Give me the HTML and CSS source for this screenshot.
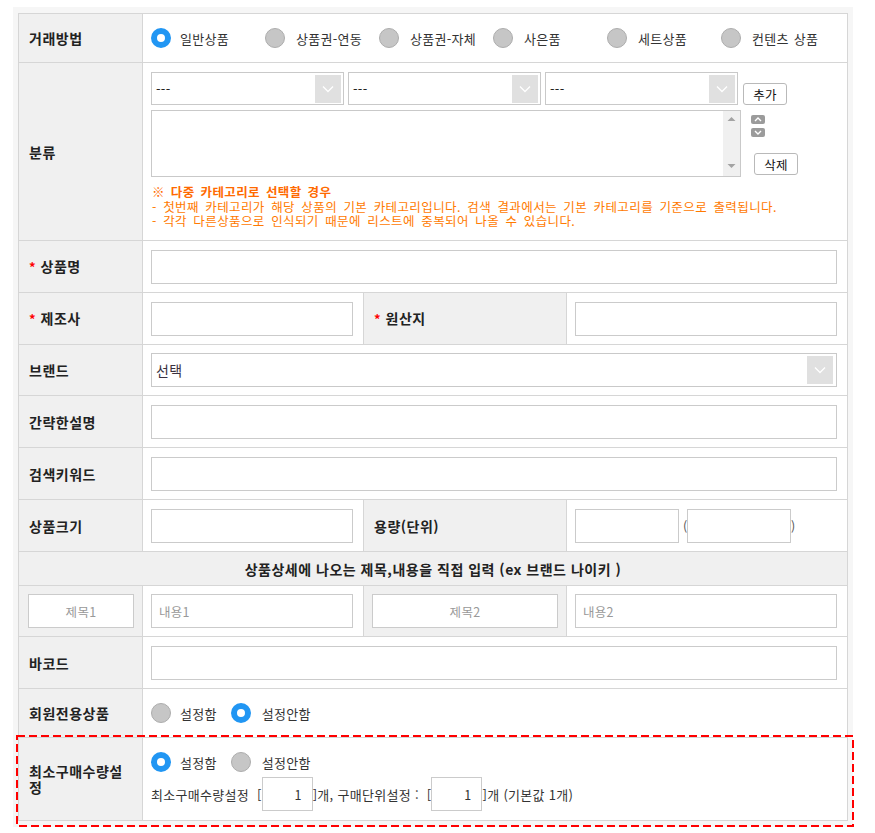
FILE: index.html
```html
<!DOCTYPE html>
<html lang="ko">
<head>
<meta charset="utf-8">
<title>상품등록</title>
<link rel="stylesheet" href="styles.css">
</head>
<body>
<div class="page">
  <table class="form">
    <colgroup><col class="c1"><col class="c2"><col class="c3"><col class="c4"></colgroup>
    <tr class="h49">
      <th>거래방법</th>
      <td colspan="3">
        <div class="radios wide">
          <span class="opt"><span class="rd on"></span>일반상품</span>
          <span class="opt"><span class="rd"></span>상품권-연동</span>
          <span class="opt"><span class="rd"></span>상품권-자체</span>
          <span class="opt"><span class="rd"></span>사은품</span>
          <span class="opt"><span class="rd"></span>세트상품</span>
          <span class="opt"><span class="rd"></span>컨텐츠 상품</span>
        </div>
      </td>
    </tr>
    <tr class="h178">
      <th>분류</th>
      <td colspan="3" class="cat">
        <div class="cat-top">
          <div class="sel cat-sel"><span>---</span><span class="arr"><svg width="12" height="8" viewBox="0 0 12 8"><polyline points="1,1.5 6,6.5 11,1.5" fill="none" stroke="#fff" stroke-width="1.3"/></svg></span></div>
          <div class="sel cat-sel"><span>---</span><span class="arr"><svg width="12" height="8" viewBox="0 0 12 8"><polyline points="1,1.5 6,6.5 11,1.5" fill="none" stroke="#fff" stroke-width="1.3"/></svg></span></div>
          <div class="sel cat-sel"><span>---</span><span class="arr"><svg width="12" height="8" viewBox="0 0 12 8"><polyline points="1,1.5 6,6.5 11,1.5" fill="none" stroke="#fff" stroke-width="1.3"/></svg></span></div>
          <span class="btn add">추가</span>
        </div>
        <div class="cat-mid">
          <div class="listbox">
            <div class="lb-area"></div>
            <div class="lb-scroll">
              <svg width="9" height="6" viewBox="0 0 9 6"><polygon points="0.5,5 4.5,1 8.5,5" fill="#a3a3a3"/></svg>
              <svg width="9" height="6" viewBox="0 0 9 6"><polygon points="0.5,1 4.5,5 8.5,1" fill="#a3a3a3"/></svg>
            </div>
          </div>
          <div class="side">
            <span class="mv"><svg width="8" height="5" viewBox="0 0 8 5"><polyline points="1,4 4,1 7,4" fill="none" stroke="#fff" stroke-width="1.4"/></svg></span>
            <span class="mv dn"><svg width="8" height="5" viewBox="0 0 8 5"><polyline points="1,1 4,4 7,1" fill="none" stroke="#fff" stroke-width="1.4"/></svg></span>
            <span class="btn del">삭제</span>
          </div>
        </div>
        <div class="notes">
          <p class="nt">※ 다중 카테고리로 선택할 경우</p>
          <p>- 첫번째 카테고리가 해당 상품의 기본 카테고리입니다. 검색 결과에서는 기본 카테고리를 기준으로 출력됩니다.</p>
          <p>- 각각 다른상품으로 인식되기 때문에 리스트에 중복되어 나올 수 있습니다.</p>
        </div>
      </td>
    </tr>
    <tr class="h52">
      <th><span class="req">*</span>상품명</th>
      <td colspan="3"><input class="inp" type="text"></td>
    </tr>
    <tr class="h52">
      <th><span class="req">*</span>제조사</th>
      <td><input class="inp" type="text"></td>
      <th><span class="req">*</span>원산지</th>
      <td class="r"><input class="inp" type="text"></td>
    </tr>
    <tr class="h51">
      <th>브랜드</th>
      <td colspan="3">
        <div class="sel brand"><span>선택</span><span class="arr"><svg width="12" height="8" viewBox="0 0 12 8"><polyline points="1,1.5 6,6.5 11,1.5" fill="none" stroke="#fff" stroke-width="1.3"/></svg></span></div>
      </td>
    </tr>
    <tr class="h52">
      <th>간략한설명</th>
      <td colspan="3"><input class="inp" type="text"></td>
    </tr>
    <tr class="h52">
      <th>검색키워드</th>
      <td colspan="3"><input class="inp" type="text"></td>
    </tr>
    <tr class="h52">
      <th>상품크기</th>
      <td><input class="inp" type="text"></td>
      <th>용량(단위)</th>
      <td class="r">
        <div class="vol"><input class="inp small" type="text"><span class="par">(</span><input class="inp small" type="text"><span class="par">)</span></div>
      </td>
    </tr>
    <tr class="h34">
      <th colspan="4" class="head">상품상세에 나오는 제목,내용을 직접 입력 (ex 브랜드 나이키 )</th>
    </tr>
    <tr class="h51">
      <th class="tin"><input class="inp ttl" type="text" placeholder="제목1"></th>
      <td><input class="inp" type="text" placeholder="내용1"></td>
      <th class="tin2"><input class="inp ttl" type="text" placeholder="제목2"></th>
      <td class="r"><input class="inp" type="text" placeholder="내용2"></td>
    </tr>
    <tr class="h52">
      <th>바코드</th>
      <td colspan="3"><input class="inp" type="text"></td>
    </tr>
    <tr class="h49">
      <th>회원전용상품</th>
      <td colspan="3">
        <div class="radios">
          <span class="opt"><span class="rd"></span>설정함</span>
          <span class="opt"><span class="rd on"></span>설정안함</span>
        </div>
      </td>
    </tr>
    <tr class="h83">
      <th>최소구매수량설정</th>
      <td colspan="3" class="minq">
        <div class="radios">
          <span class="opt"><span class="rd on"></span>설정함</span>
          <span class="opt"><span class="rd"></span>설정안함</span>
        </div>
        <div class="qty">최소구매수량설정 &nbsp;[<input class="inp num" type="text" value="1">]개, 구매단위설정 : &nbsp;[<input class="inp num" type="text" value="1">]개 (기본값 1개)</div>
      </td>
    </tr>
  </table>
  <svg class="mark" width="838" height="92" viewBox="0 0 838 92"><rect x="1" y="1" width="836" height="90" fill="none" stroke="#f00" stroke-width="2" stroke-dasharray="8 4"/></svg>
</div>
</body>
</html>
```
FILE: styles.css
```css
body {
  margin: 0;
  background: #fff;
  font-family: "Noto Sans CJK KR", "Noto Sans", sans-serif;
  color: #333;
}
.page {
  position: relative;
  margin: 7px 22px 0 13px;
  padding: 6px 6px 6px 5px;
  background: #f6f6f6;
}
.form {
  border-collapse: collapse;
  table-layout: fixed;
  width: 829px;
  background: #fff;
  border: 1px solid #d6d6d6;
}
.c1 { width: 124px; }
.c2 { width: 221px; }
.c3 { width: 203px; }
.c4 { width: 281px; }
.h49 { height: 49px; }
.h178 { height: 178px; }
.h52 { height: 52px; }
.h51 { height: 51px; }
.h34 { height: 34px; }
.h83 { height: 83px; }
th {
  background: #f0f0f0;
  text-align: left;
  font-weight: bold;
  font-size: 14px;
  letter-spacing: 0.5px;
  color: #222;
  padding: 0 8px 0 10px;
  border: 1px solid #d6d6d6;
  line-height: 16px;
}
td {
  padding: 0 10px 0 8px;
  border: 1px solid #d6d6d6;
  font-size: 13px;
  letter-spacing: 0.3px;
  vertical-align: middle;
}
td.r { padding-left: 8px; }
.req { color: #f00; font-size: 13px; margin-right: 5px; letter-spacing: 0; }
.inp {
  display: block;
  box-sizing: border-box;
  width: 100%;
  height: 34px;
  margin: 0;
  border: 1px solid #cbcbcb;
  background: #fff;
  font-family: inherit;
  font-size: 12.5px;
  letter-spacing: 0.3px;
  color: #333;
  padding: 0 7px;
  outline: none;
}
.inp::placeholder { color: #999; }
.radios { display: flex; align-items: center; }
.opt { display: inline-flex; align-items: center; font-size: 13px; color: #333; margin-right: 14px; word-spacing: 1px; }
.radios.wide .opt { width: 114px; margin-right: 0; }
.rd {
  box-sizing: border-box;
  width: 20px;
  height: 20px;
  border-radius: 50%;
  background: #c6c6c6;
  border: 1px solid #adadad;
  margin-right: 9px;
  flex: none;
}
.rd.on {
  background: #fff;
  border: 6px solid #2196f3;
}
.radios .opt:not(:first-child) .rd { margin-right: 11px; }
.cat { vertical-align: top; padding-top: 9px; }
.cat-top { display: flex; align-items: flex-end; }
.sel {
  box-sizing: border-box;
  display: flex;
  align-items: center;
  justify-content: space-between;
  border: 1px solid #c9c9c9;
  background: #fff;
  padding: 0 2px 0 4px;
  color: #222;
}
.cat-sel { width: 193px; height: 33px; margin-right: 4px; font-size: 13px; }
.cat-sel:nth-child(3) { margin-right: 5px; }
.arr {
  width: 26px;
  height: 28px;
  background: #e0e0e0;
  display: flex;
  align-items: center;
  justify-content: center;
}
.btn {
  box-sizing: border-box;
  display: inline-flex;
  align-items: center;
  justify-content: center;
  border: 1px solid #b9b9b9;
  border-radius: 3px;
  background: #fff;
  font-size: 12.5px;
  color: #111;
}
.add { width: 44px; height: 22px; }
.cat-mid { display: flex; margin-top: 5px; }
.listbox {
  box-sizing: border-box;
  width: 590px;
  height: 67px;
  border: 1px solid #c9c9c9;
  display: flex;
}
.lb-area { flex: 1; }
.lb-scroll {
  width: 17px;
  background: #f0f0f0;
  display: flex;
  flex-direction: column;
  justify-content: space-between;
  align-items: center;
  padding: 5px 0 7px;
}
.side { display: flex; flex-direction: column; padding-left: 10px; padding-top: 5px; }
.mv {
  width: 14px;
  height: 9px;
  border-radius: 2px;
  background: #9b9b9b;
  display: flex;
  align-items: center;
  justify-content: center;
}
.mv.dn { margin-top: 4px; height: 9px; }
.del { width: 44px; height: 22px; margin-top: 16px; margin-left: 3px; }
.notes { margin-top: 8px; padding-left: 1px; color: #ff7a00; font-size: 12.5px; line-height: 14.7px; letter-spacing: 0.4px; }
.notes p { margin: 0; word-spacing: 2.5px; white-space: nowrap; }
.notes .nt { font-weight: bold; color: #ff6a00; word-spacing: 2px; }
.brand { height: 34px; font-size: 14px; padding-left: 4px; color: #3a3140; }
.brand .arr { margin-right: 1px; }
.vol { display: flex; align-items: center; }
.small { width: 104px; }
.par { font-size: 12.5px; color: #555; width: 4px; }
.par:first-of-type { margin: 0 0 0 4px; }
.head { text-align: center; padding: 0; }
.tin { padding: 0 8px 0 9px; background: #f0f0f0; }
.tin2 { padding: 0 8px 0 8px; background: #f0f0f0; }
.ttl { text-align: center; font-weight: normal; }
.minq { padding-top: 14px; padding-bottom: 8px; vertical-align: top; }
.qty { display: flex; align-items: center; margin-top: 5px; font-size: 13px; color: #333; white-space: pre; word-spacing: 0; }
.num { width: 51px; text-align: right; padding-right: 10px; }
.mark { position: absolute; left: 3px; top: 728px; }
```
